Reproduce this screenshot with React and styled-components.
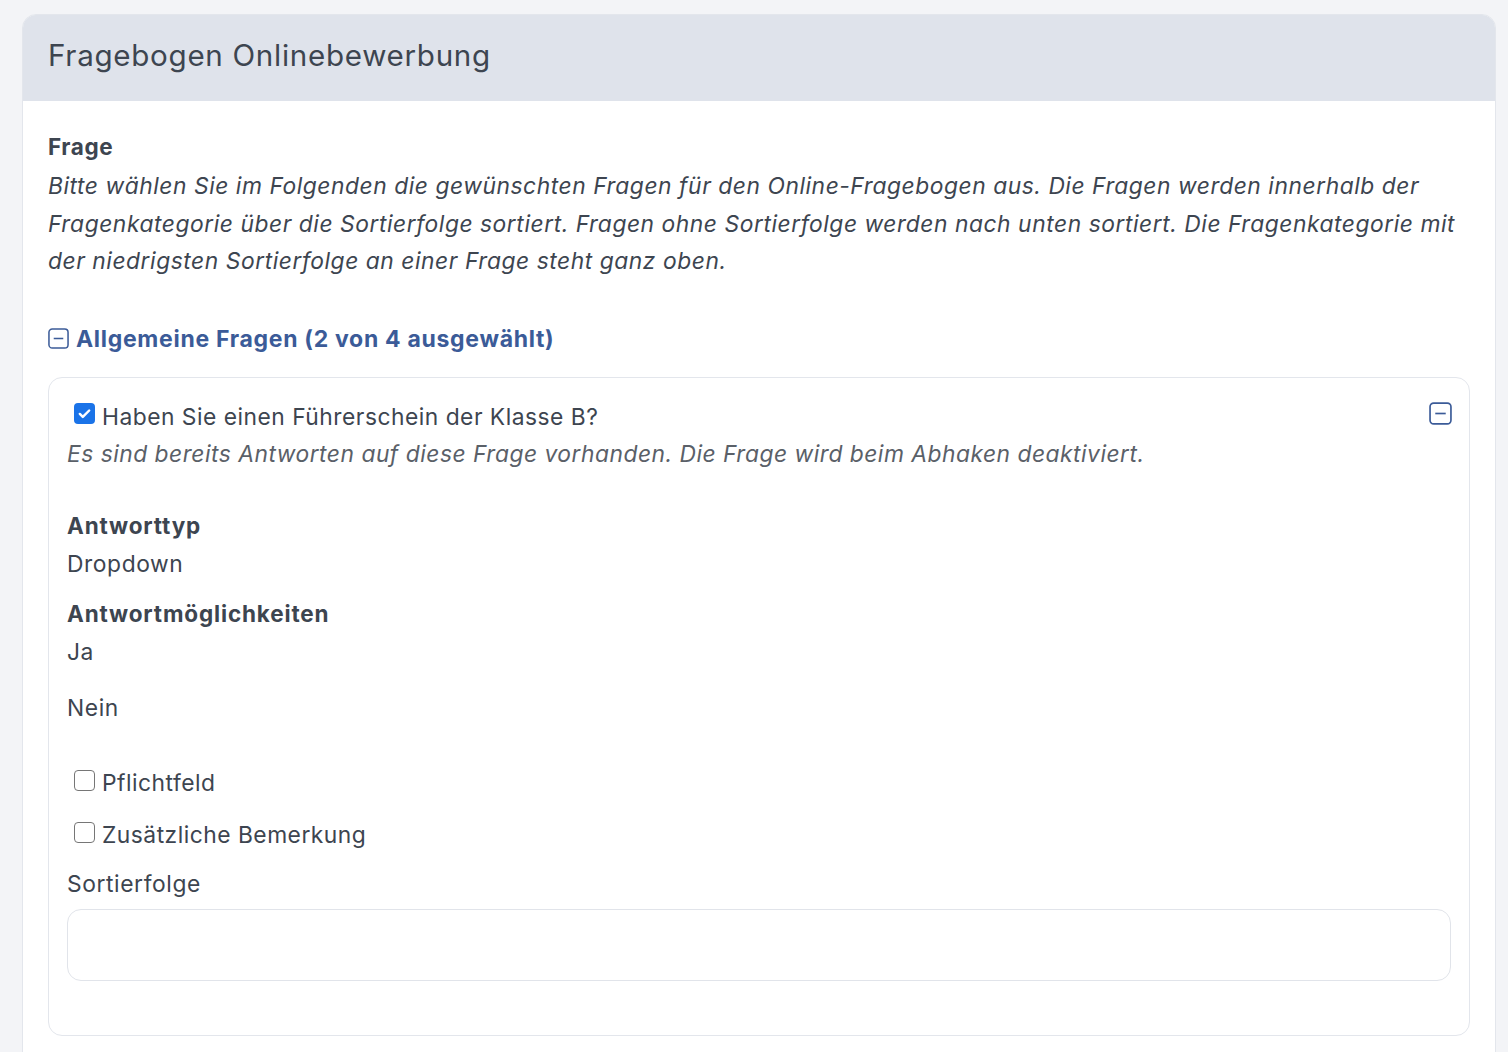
import React from "react";
import styled, { createGlobalStyle } from "styled-components";

const Global = createGlobalStyle`
  html, body { margin: 0; padding: 0; background: #f3f4f7; }
  body { font-family: Inter, "Noto Sans", sans-serif; color: #3d4550; }
  * { box-sizing: border-box; }
`;

const Page = styled.div`
  padding: 14px 12px 0 22px;
  min-height: 1052px;
`;

const Card = styled.section`
  background: #fff;
  border: 1px solid #e3e6ec;
  border-radius: 14px 14px 0 0;
  overflow: hidden;
`;

const CardHeader = styled.header`
  background: #dfe3eb;
  height: 86px;
  display: flex;
  align-items: center;
  padding: 0 25px 6px;
`;

const Title = styled.h1`
  margin: 0;
  font-size: 29.6px;
  font-weight: 400;
  color: #3d4550;
  letter-spacing: 0.7px;
`;

const CardBody = styled.div`
  padding: 30px 25px 20px 25px;
`;

const Label = styled.div`
  font-weight: 700;
  font-size: 22.5px;
  line-height: 32px;
  letter-spacing: 0.6px;
  color: #3d4550;
`;

const Help = styled.p`
  margin: ${(p) => p.$mt || 4}px 0 0;
  font-style: italic;
  font-size: 22.8px;
  letter-spacing: ${(p) => (p.$muted ? 0.5 : 0.55)}px;
  line-height: 37.5px;
  color: ${(p) => (p.$muted ? "#5a6068" : "#3d4550")};
`;

const GroupToggle = styled.div`
  margin-top: 42px;
  display: flex;
  align-items: center;
  gap: 7px;
  color: #3b5b98;
  font-weight: 700;
  font-size: 23px;
  letter-spacing: 0.7px;
  line-height: 34px;
`;

const QuestionBox = styled.div`
  margin-top: 21px;
  border: 1px solid #e3e6ec;
  border-radius: 14px;
  padding: 22px 18px 54px 18px;
  position: relative;
`;

const CheckRow = styled.label`
  display: flex;
  align-items: center;
  gap: 7px;
  padding-left: 7px;
  font-size: 22.8px;
  letter-spacing: 0.5px;
  line-height: 34px;
  color: #3d4550;
  margin-top: ${(p) => p.$mt || 0}px;
`;

const Box = styled.span`
  width: 21px;
  height: 21px;
  border-radius: 4px;
  flex: none;
  margin-top: -6px;
  display: inline-flex;
  align-items: center;
  justify-content: center;
  background: ${(p) => (p.$checked ? "#1a73e8" : "#fff")};
  border: ${(p) => (p.$checked ? "none" : "1.5px solid #767676")};
`;

const CornerToggle = styled.div`
  position: absolute;
  top: 24px;
  right: 17px;
`;

const FieldLabel = styled.div`
  font-weight: 700;
  font-size: 22.5px;
  letter-spacing: 0.85px;
  line-height: 34px;
  margin-top: ${(p) => p.$mt || 0}px;
`;

const FieldValue = styled.div`
  font-size: 22.8px;
  letter-spacing: 0.6px;
  line-height: 34px;
  margin-top: ${(p) => p.$mt || 0}px;
`;

const Input = styled.div`
  margin-top: 8px;
  height: 72px;
  border: 1px solid #e1e4ea;
  border-radius: 14px;
`;

const MinusSquare = ({ size = 22 }) => (
  <svg width={size} height={size} viewBox="0 0 22 22" fill="none">
    <rect x="1" y="1" width="20" height="20" rx="3.5" stroke="#3b5b98" strokeWidth="1.6" />
    <line x1="6" y1="11" x2="16" y2="11" stroke="#3b5b98" strokeWidth="1.6" />
  </svg>
);

const Check = ({ checked }) => (
  <Box $checked={checked}>
    {checked && (
      <svg width="15" height="15" viewBox="0 0 16 16" fill="none">
        <path d="M3 8.5l3.2 3.2L13 4.8" stroke="#fff" strokeWidth="2.6" strokeLinecap="round" strokeLinejoin="round" />
      </svg>
    )}
  </Box>
);

export default function App() {
  return (
    <>
      <Global />
      <Page>
        <Card>
          <CardHeader>
            <Title>Fragebogen Onlinebewerbung</Title>
          </CardHeader>
          <CardBody>
            <Label>Frage</Label>
            <Help>
              Bitte wählen Sie im Folgenden die gewünschten Fragen für den Online-Fragebogen aus. Die Fragen werden innerhalb der Fragenkategorie über die Sortierfolge sortiert. Fragen ohne Sortierfolge werden nach unten sortiert. Die Fragenkategorie mit der niedrigsten Sortierfolge an einer Frage steht ganz oben.
            </Help>
            <GroupToggle>
              <MinusSquare size={21} />
              Allgemeine Fragen (2 von 4 ausgewählt)
            </GroupToggle>
            <QuestionBox>
              <CornerToggle>
                <MinusSquare size={23} />
              </CornerToggle>
              <CheckRow>
                <Check checked />
                Haben Sie einen Führerschein der Klasse B?
              </CheckRow>
              <Help $muted $mt={1}>
                Es sind bereits Antworten auf diese Frage vorhanden. Die Frage wird beim Abhaken deaktiviert.
              </Help>
              <FieldLabel $mt={37}>Antworttyp</FieldLabel>
              <FieldValue $mt={4}>Dropdown</FieldValue>
              <FieldLabel $mt={16}>Antwortmöglichkeiten</FieldLabel>
              <FieldValue $mt={4}>Ja</FieldValue>
              <FieldValue $mt={22}>Nein</FieldValue>
              <CheckRow $mt={41}>
                <Check />
                Pflichtfeld
              </CheckRow>
              <CheckRow $mt={18}>
                <Check />
                Zusätzliche Bemerkung
              </CheckRow>
              <FieldValue $mt={15}>Sortierfolge</FieldValue>
              <Input />
            </QuestionBox>
          </CardBody>
        </Card>
      </Page>
    </>
  );
}
